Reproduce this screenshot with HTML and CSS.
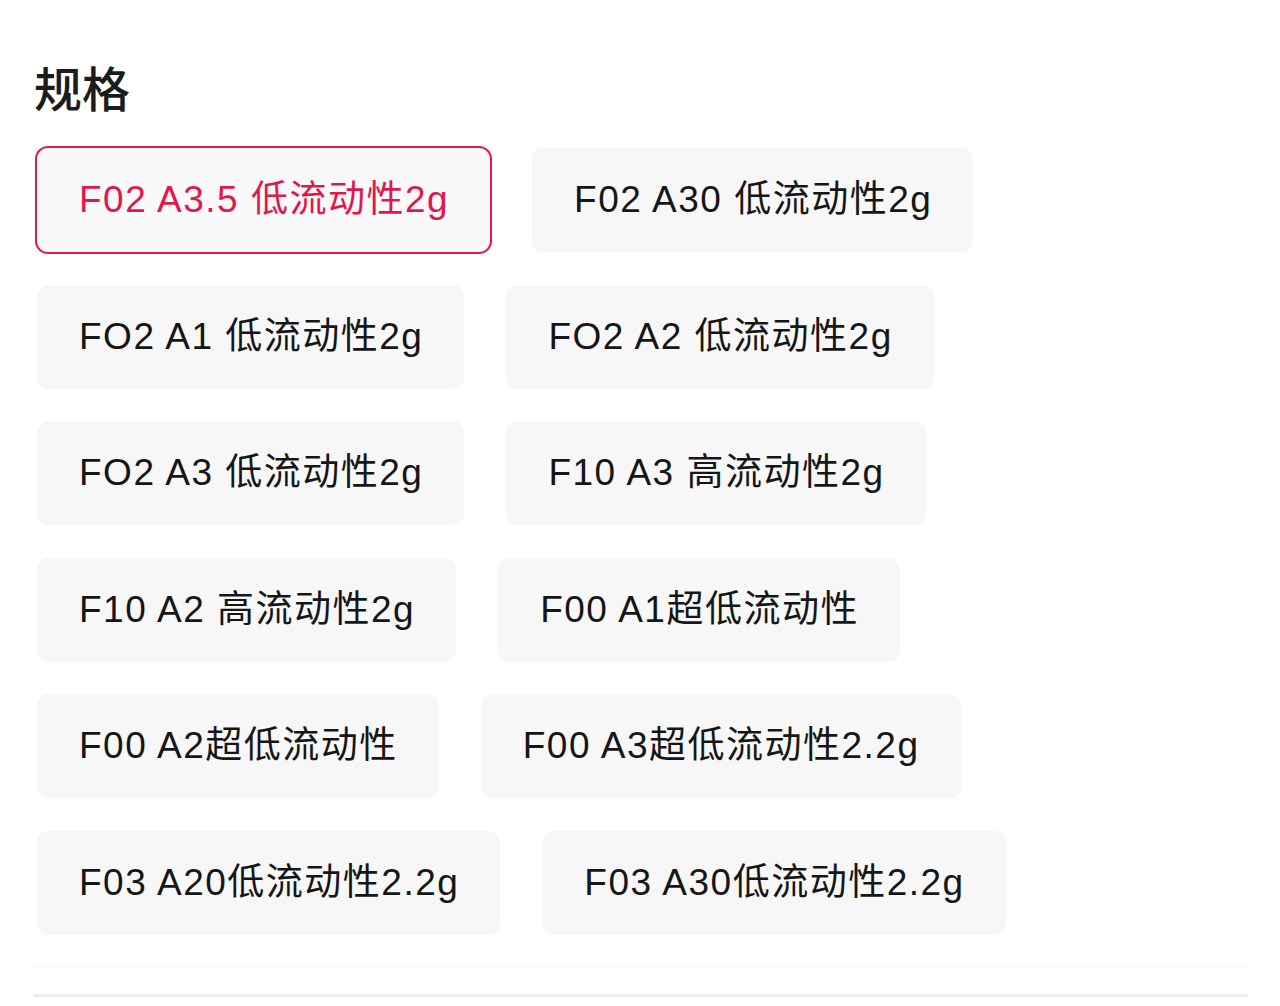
FILE: index.html
```html
<!DOCTYPE html>
<html lang="zh-CN">
<head>
<meta charset="utf-8">
<title>规格</title>
<link rel="stylesheet" href="styles.css">
</head>
<body>
<section class="spec">
  <h2 class="spec-title">规格</h2>
  <div class="options">
    <button class="opt selected">F02 A3.5 低流动性2g</button>
    <button class="opt">F02 A30 低流动性2g</button>
    <button class="opt">FO2 A1 低流动性2g</button>
    <button class="opt">FO2 A2 低流动性2g</button>
    <button class="opt">FO2 A3 低流动性2g</button>
    <button class="opt">F10 A3 高流动性2g</button>
    <button class="opt">F10 A2 高流动性2g</button>
    <button class="opt">F00 A1超低流动性</button>
    <button class="opt">F00 A2超低流动性</button>
    <button class="opt">F00 A3超低流动性2.2g</button>
    <button class="opt">F03 A20低流动性2.2g</button>
    <button class="opt">F03 A30低流动性2.2g</button>
  </div>
  <div class="fade-band"></div>
  <div class="divider"></div>
</section>
</body>
</html>
```
FILE: styles.css
```css
html, body {
  margin: 0;
  padding: 0;
  background: #ffffff;
}
body {
  font-family: "Liberation Sans", "Noto Sans CJK SC", sans-serif;
  color: #1a1a1a;
}
.spec {
  padding: 53px 32px 0 33px;
  width: 1215px;
}
.spec-title {
  margin: 0 0 0 1px;
  font-family: "Noto Sans CJK SC", sans-serif;
  font-weight: 500;
  font-size: 48px;
  line-height: 66px;
  color: #1c1c1c;
}
.options {
  margin-top: 27px;
  padding-left: 2px;
  display: flex;
  flex-wrap: wrap;
  column-gap: 38px;
  row-gap: 28.6px;
  align-items: center;
}
.opt {
  font-family: "Liberation Sans", "Noto Sans CJK SC", sans-serif;
  font-size: 37px;
  letter-spacing: 1.5px;
  line-height: 40px;
  height: 108px;
  padding: 0 41px 0 42px;
  border: 2px solid transparent;
  background: #f7f7f7;
  background-clip: padding-box;
  border-radius: 13px;
  color: #161616;
  white-space: nowrap;
  cursor: pointer;
}
.opt.selected {
  border-color: #e2174a;
  color: #e2174a;
  background: #f9f9fa;
}
.fade-band {
  margin-top: 27px;
  height: 4px;
  background: #fbfbfb;
}
.divider {
  margin-top: 26px;
  height: 3px;
  background: #ebebeb;
}
```
